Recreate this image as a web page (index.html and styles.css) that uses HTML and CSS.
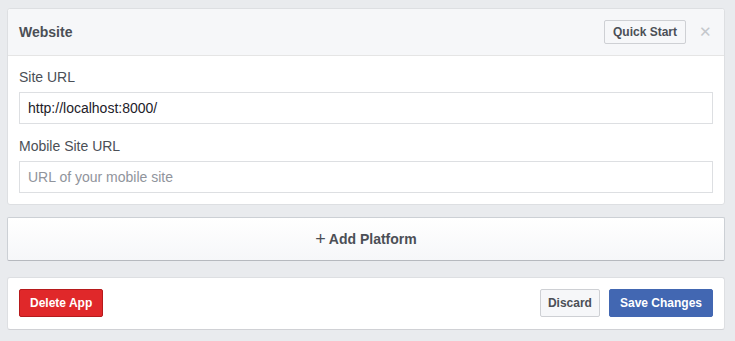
FILE: index.html
```html
<!DOCTYPE html>
<html>
<head>
  <title>Website Settings</title>
  <link rel="stylesheet" href="styles.css">
</head>
<body>
  <div class="page">
    <!-- Plataforma: Website -->
    <div class="card">
      <div class="card-header">
        <span class="card-title">Website</span>
        <div class="header-actions">
          <button class="btn btn-light btn-small">Quick Start</button>
          <span class="close">&#x2715;</span>
        </div>
      </div>
      <div class="card-body">
        <label for="siteUrl">Site URL</label>
        <input type="text" id="siteUrl" value="http://localhost:8000/">

        <label for="mobileUrl">Mobile Site URL</label>
        <input type="text" id="mobileUrl" placeholder="URL of your mobile site">
      </div>
    </div>

    <div class="add-platform">
      <span class="plus">+</span> Add Platform
    </div>

    <div class="card footer">
      <button class="btn btn-red">Delete App</button>
      <div class="footer-right">
        <button class="btn btn-light btn-narrow">Discard</button>
        <button class="btn btn-blue">Save Changes</button>
      </div>
    </div>
  </div>
</body>
</html>
```

FILE: styles.css
```css
body {
  margin: 0;
  padding: 0;
  background-color: #e9ebee;
  font-family: "Liberation Sans", Arial, sans-serif;
  color: #4b4f56;
}

.page {
  padding: 8px 10px 0 7px;
}

.card {
  background-color: #fff;
  border: 1px solid #dddfe2;
  border-radius: 3px;
}

.card-header {
  display: flex;
  align-items: center;
  justify-content: space-between;
  height: 46px;
  padding: 0 12px 0 11px;
  background-color: #f6f7f9;
  border-bottom: 1px solid #e5e5e5;
  border-radius: 3px 3px 0 0;
}

.card-title {
  font-size: 14px;
  font-weight: bold;
  color: #4b4f56;
}

.header-actions {
  display: flex;
  align-items: center;
  gap: 13px;
}

.close {
  font-size: 15px;
  color: #c4c7cc;
}

.card-body {
  padding: 13px 11px 11px 11px;
}

label {
  display: block;
  font-size: 14px;
  color: #4b4f56;
  margin-bottom: 7px;
}

input[type="text"] {
  display: block;
  width: 100%;
  height: 32px;
  box-sizing: border-box;
  padding: 0 8px;
  margin-bottom: 14px;
  border: 1px solid #dddfe2;
  font-family: "Liberation Sans", Arial, sans-serif;
  font-size: 14px;
  color: #1d2129;
}

input[type="text"]:last-child {
  margin-bottom: 0;
}

input::placeholder {
  color: #90949c;
}

.add-platform {
  margin-top: 12px;
  height: 42px;
  display: flex;
  align-items: center;
  justify-content: center;
  background: linear-gradient(#fff, #f6f7f9);
  border: 1px solid #ccd0d5;
  border-bottom-color: #b6b9be;
  border-radius: 2px;
  font-size: 14px;
  font-weight: bold;
  color: #4b4f56;
}

.plus {
  font-weight: normal;
  font-size: 18px;
  margin-right: 3px;
  line-height: 1;
}

.footer {
  margin-top: 16px;
  display: flex;
  justify-content: space-between;
  align-items: center;
  padding: 11px 11px 12px 11px;
  border-bottom-color: #d0d1d5;
}

.footer-right {
  display: flex;
  gap: 9px;
}

.btn {
  height: 28px;
  padding: 0 10px;
  border-radius: 2px;
  font-family: "Liberation Sans", Arial, sans-serif;
  font-size: 12px;
  font-weight: bold;
  border: 1px solid;
  cursor: pointer;
}

.btn-small {
  height: 24px;
  padding: 0 8px;
}

.btn-narrow {
  padding: 0 7px;
}

.btn-light {
  background-color: #f6f7f9;
  border-color: #ced0d4;
  color: #4b4f56;
}

.btn-red {
  background-color: #e0282a;
  border-color: #b61a1c;
  color: #fff;
}

.btn-blue {
  background-color: #4267b2;
  border-color: #4267b2;
  color: #fff;
}
```
